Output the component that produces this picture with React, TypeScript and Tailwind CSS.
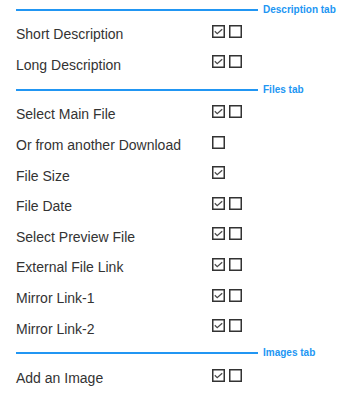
import React from "react";

type Row = { label: string; boxes: boolean[] };

const sections: { title: string; rows: Row[] }[] = [
  {
    title: "Description tab",
    rows: [
      { label: "Short Description", boxes: [true, false] },
      { label: "Long Description", boxes: [true, false] },
    ],
  },
  {
    title: "Files tab",
    rows: [
      { label: "Select Main File", boxes: [true, false] },
      { label: "Or from another Download", boxes: [false] },
      { label: "File Size", boxes: [true] },
      { label: "File Date", boxes: [true, false] },
      { label: "Select Preview File", boxes: [true, false] },
      { label: "External File Link", boxes: [true, false] },
      { label: "Mirror Link-1", boxes: [true, false] },
      { label: "Mirror Link-2", boxes: [true, false] },
    ],
  },
  {
    title: "Images tab",
    rows: [{ label: "Add an Image", boxes: [true, false] }],
  },
];

const Box = ({ checked }: { checked: boolean }) => (
  <svg width="13" height="13" viewBox="0 0 13 13" className="block">
    <rect x="0.75" y="0.75" width="11.5" height="11.5" fill="#fff" stroke="#333" strokeWidth="1.5" />
    {checked && (
      <path d="M2.8 6.3 L5.2 8.7 L10.2 4.2" fill="none" stroke="#4a4a4a" strokeWidth="1.3" />
    )}
  </svg>
);

const SectionHeader = ({ title }: { title: string }) => (
  <div className="flex h-[19px] items-center pl-4">
    <div className="h-[2px] w-[242px] bg-[#2196f3]" />
    <span className="ml-[5px] text-[10px] font-bold leading-none text-[#2196f3]">{title}</span>
  </div>
);

export default function App() {
  return (
    <div className="h-[394px] w-[348px] overflow-hidden bg-white font-['Liberation_Sans'] text-[#333]">
      {sections.map((s) => (
        <div key={s.title}>
          <SectionHeader title={s.title} />
          {s.rows.map((r) => (
            <div key={r.label} className="flex h-[30.6px] items-center pl-4">
              <span className="w-[196px] text-[14px] leading-none">{r.label}</span>
              <div className="mb-[6px] flex gap-1">
                {r.boxes.map((b, i) => (
                  <Box key={i} checked={b} />
                ))}
              </div>
            </div>
          ))}
        </div>
      ))}
    </div>
  );
}
